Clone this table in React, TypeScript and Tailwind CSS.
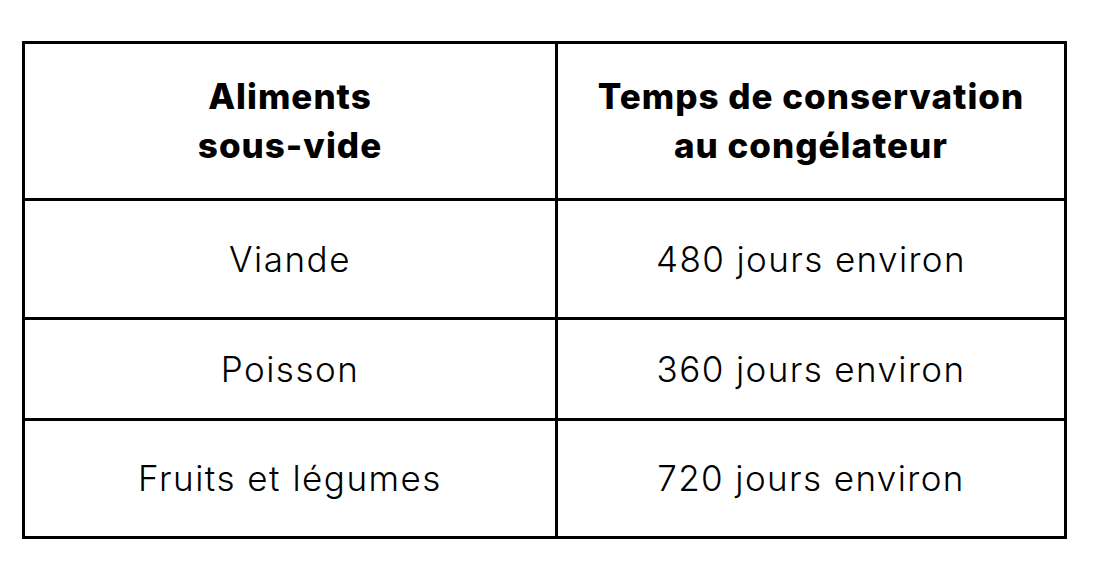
const rows = [
  { food: 'Viande', time: '480 jours environ', h: 'h-[119px]' },
  { food: 'Poisson', time: '360 jours environ', h: 'h-[101px]' },
  { food: 'Fruits et légumes', time: '720 jours environ', h: 'h-[115px]' },
];

export default function App() {
  return (
    <div className="w-[1101px] h-[572px] bg-white pt-[41px] pl-[22px] text-black font-['Inter','Open_Sans',sans-serif]">
      <div className="w-[1045px] border-[3px] border-black grid grid-cols-[533px_1fr]">
        <div className="h-[157px] border-r-[3px] border-b-[3px] border-black flex items-center justify-center text-center font-extrabold text-[35px] leading-[49px] tracking-[1px]">
          Aliments<br />sous-vide
        </div>
        <div className="h-[157px] border-b-[3px] border-black flex items-center justify-center text-center font-extrabold text-[35px] leading-[49px] tracking-[1px]">
          Temps de conservation<br />au congélateur
        </div>
        {rows.map((r, i) => (
          <div key={r.food} className="contents">
            <div
              className={`${r.h} border-r-[3px] border-black flex items-center justify-center font-light text-[35px] tracking-[1.5px] ${
                i < rows.length - 1 ? 'border-b-[3px]' : ''
              }`}
            >
              {r.food}
            </div>
            <div
              className={`${r.h} border-black flex items-center justify-center font-light text-[35px] tracking-[1.4px] ${
                i < rows.length - 1 ? 'border-b-[3px]' : ''
              }`}
            >
              {r.time}
            </div>
          </div>
        ))}
      </div>
    </div>
  );
}
